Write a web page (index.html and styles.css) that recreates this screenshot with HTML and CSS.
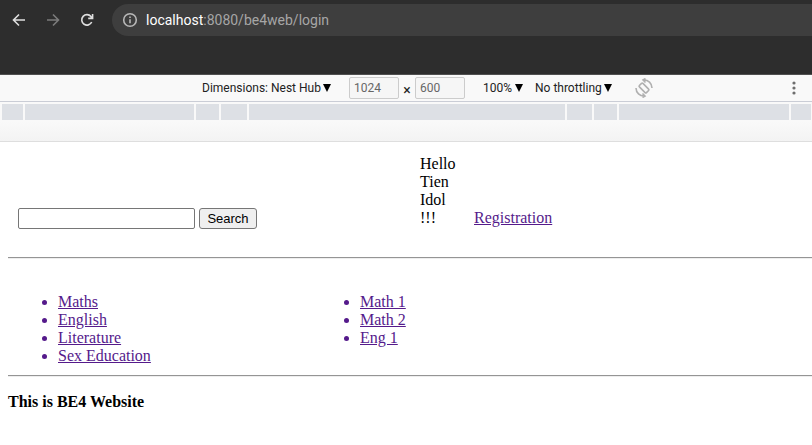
FILE: index.html
```html
<!DOCTYPE html>
<html lang="en">
<head>
<meta charset="utf-8">
<title>BE4 Website</title>
<link rel="stylesheet" href="styles.css">
</head>
<body>
<header class="browser">
  <nav class="browser-nav" aria-label="Browser">
    <button class="nav-button" type="button" aria-label="Back">
      <svg width="14" height="14" viewBox="0 0 14 14"><path d="M13 7H2M7 1.5 1.5 7 7 12.5"/></svg>
    </button>
    <button class="nav-button nav-button-off" type="button" aria-label="Forward" disabled>
      <svg width="14" height="14" viewBox="0 0 14 14"><path d="M1 7h11M7 1.5 12.5 7 7 12.5"/></svg>
    </button>
    <button class="nav-button" type="button" aria-label="Reload">
      <svg width="14" height="14" viewBox="0 0 14 14"><path d="M11.7 9A5.2 5.2 0 1 1 11 3.6L12.4 5M12.6 1v4.4H8.2"/></svg>
    </button>
  </nav>
  <div class="address">
    <svg class="info" width="16" height="16" viewBox="0 0 16 16"><circle cx="8" cy="8" r="6.3"/><path d="M8 7.2v4M8 4.5v1.6"/></svg>
    <span class="url"><span class="host">localhost</span>:8080/be4web/login</span>
  </div>
</header>

<section class="device-bar" aria-label="Device toolbar">
  <span class="picker picker-device">
    <select aria-label="Device"><option>Dimensions: Nest Hub</option></select>
    <svg width="8" height="8" viewBox="0 0 8 8"><path d="M0 0h8L4 8z"/></svg>
  </span>
  <input class="size" type="text" value="1024" aria-label="Width">
  <span class="times">×</span>
  <input class="size" type="text" value="600" aria-label="Height">
  <span class="picker picker-zoom">
    <select aria-label="Zoom"><option>100%</option></select>
    <svg width="8" height="8" viewBox="0 0 8 8"><path d="M0 0h8L4 8z"/></svg>
  </span>
  <span class="picker picker-throttle">
    <select aria-label="Throttling"><option>No throttling</option></select>
    <svg width="8" height="8" viewBox="0 0 8 8"><path d="M0 0h8L4 8z"/></svg>
  </span>
  <button class="rotate" type="button" aria-label="Rotate">
    <svg width="20" height="20" viewBox="0 0 20 20"><rect x="7.5" y="5" width="5" height="10" rx="1" transform="rotate(-45 10 10)"/><path d="M2 10A8 8 0 0 0 10.5 18M18 10A8 8 0 0 0 9.5 2M8.5 15.5 11 18 8.5 19.5M11.5 4.5 9 2 11.5 .5"/></svg>
  </button>
  <button class="more" type="button" aria-label="More options">
    <svg width="4" height="14" viewBox="0 0 4 14"><circle cx="2" cy="2" r="1.6"/><circle cx="2" cy="7" r="1.6"/><circle cx="2" cy="12" r="1.6"/></svg>
  </button>
</section>

<div class="ruler">
  <i></i><i></i><i></i><i></i><i></i><i></i><i></i><i></i><i></i>
</div>

<main class="page">
  <div class="top">
    <form class="search">
      <input class="query" type="text" aria-label="Search text">
      <button class="submit" type="button">Search</button>
    </form>
    <div class="greeting">Hello Tien Idol !!!</div>
    <a href="#">Registration</a>
  </div>
  <hr>
  <div class="lists">
    <ul>
      <li><a href="#">Maths</a></li>
      <li><a href="#">English</a></li>
      <li><a href="#">Literature</a></li>
      <li><a href="#">Sex Education</a></li>
    </ul>
    <ul>
      <li><a href="#">Math 1</a></li>
      <li><a href="#">Math 2</a></li>
      <li><a href="#">Eng 1</a></li>
    </ul>
  </div>
  <hr>
  <h1>This is BE4 Website</h1>
</main>
</body>
</html>
```
FILE: styles.css
```css
* {
  box-sizing: border-box;
}

body {
  margin: 0;
  background: #fff;
  color: #000;
  font: 16px/18px "Liberation Serif", serif;
}

button,
select {
  margin: 0;
  padding: 0;
  border: 0;
  background: none;
}

svg {
  display: block;
  flex: none;
}

/* Browser bar */
.browser {
  display: flex;
  align-items: flex-start;
  height: 75px;
  padding: 4px 0 0 12px;
  border-bottom: 1px solid #505050;
  background: #2d2d2d;
}

.browser-nav {
  display: flex;
  gap: 20px;
  padding-top: 9px;
}

.nav-button {
  width: 14px;
}

.nav-button svg {
  fill: none;
  stroke: #dedede;
  stroke-width: 1.6;
}

.nav-button-off svg {
  stroke: #7b7b7b;
}

.address {
  display: flex;
  flex: 1;
  align-items: center;
  gap: 8px;
  height: 32px;
  margin-left: 18px;
  padding-left: 10px;
  border-radius: 16px 0 0 16px;
  background: #3e3e3e;
}

.info {
  fill: none;
  stroke: #b8b8b8;
  stroke-width: 1.6;
}

.url {
  color: #a6a6a6;
  font: 14px/20px Roboto, sans-serif;
}

.host {
  color: #fff;
}

/* Device toolbar */
.device-bar {
  display: flex;
  align-items: center;
  height: 27px;
  padding: 0 16px 0 202px;
  border-bottom: 1px solid #cacdd6;
  background: #f9f9f9;
  color: #222;
  font: 12px/16px Roboto, sans-serif;
}

.picker {
  display: flex;
  align-items: center;
  gap: 2px;
}

.picker select {
  appearance: none;
  color: inherit;
  font: inherit;
}

.picker-device {
  margin-right: 18px;
}

.picker-zoom {
  margin: 0 12px 0 18px;
}

.size {
  width: 50px;
  height: 22px;
  padding: 0 4px;
  border: 1px solid #ccc;
  border-radius: 2px;
  background: #f6f6f6;
  color: #666;
  font: inherit;
}

.times {
  width: 16px;
  padding-top: 3px;
  font-size: 14px;
  text-align: center;
}

.rotate {
  margin-left: 22px;
}

.rotate svg {
  fill: none;
  stroke: #b0b0b0;
  stroke-width: 1.6;
}

.more {
  margin-left: auto;
}

.more svg {
  fill: #6e6e6e;
}

/* Breakpoint ruler */
.ruler {
  display: grid;
  grid-template-columns: 21fr 169fr 23fr 26fr 316fr 25fr 23fr 170fr 20fr;
  gap: 2px;
  height: 40px;
  padding: 2px 1px 21px 2px;
  border-bottom: 1px solid #dedede;
  background: linear-gradient(#f9f9f9 50%, #f3f3f3);
}

.ruler i {
  background: #dde0e5;
}

/* Web page */
.page {
  padding: 13px 0 0 8px;
}

.top {
  display: flex;
  align-items: last baseline;
  padding: 0 0 28px 10px;
}

.search {
  display: flex;
  flex: 0 0 402px;
  gap: 4px;
  align-items: baseline;
}

.query {
  width: 177px;
  height: 21px;
  border: 1px solid #767676;
  border-radius: 2px;
}

.submit {
  width: 58px;
  height: 21px;
  border: 1px solid #767676;
  border-radius: 3px;
  background: #efefef;
  font: 13px/15px "Liberation Sans", sans-serif;
}

.greeting {
  width: 36px;
  margin-right: 18px;
}

a,
li {
  color: #551a8b;
}

hr {
  height: 2px;
  margin: 0;
  border: 0;
  border-top: 1px solid #959595;
  border-bottom: 1px solid #eee;
}

.lists {
  display: grid;
  grid-template-columns: 302px 1fr;
  padding: 34px 0 10px;
}

ul {
  margin: 0;
  padding-left: 50px;
}

h1 {
  margin: 16px 0;
  font-size: 16px;
}
```
